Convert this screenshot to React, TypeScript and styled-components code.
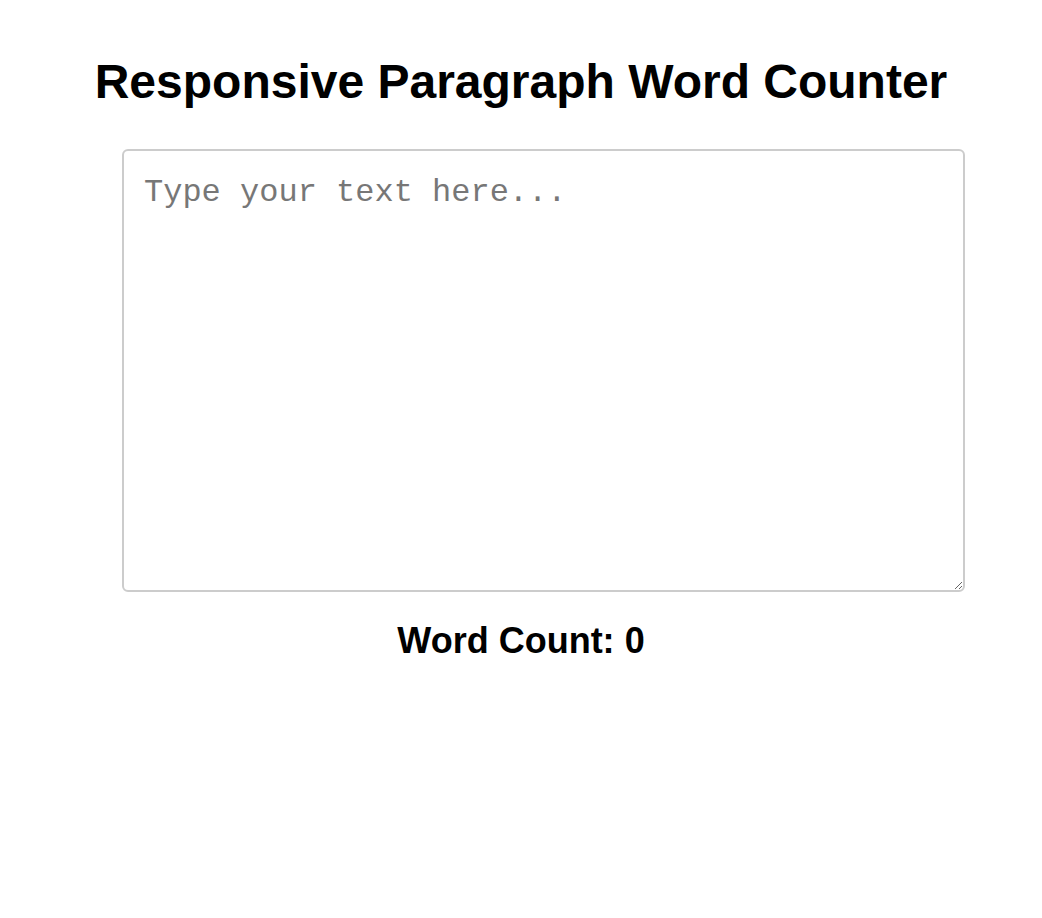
import React, { useState } from 'react';
import styled, { createGlobalStyle } from 'styled-components';

const GlobalStyle = createGlobalStyle`
  body {
    margin: 8px;
    background: #ffffff;
    font-family: "Liberation Sans", Arial, sans-serif;
  }
`;

const Page = styled.main`
  display: flex;
  flex-direction: column;
  align-items: center;
`;

const Title = styled.h1`
  margin: 46px 0 40px;
  font-size: 48px;
  font-weight: bold;
  color: #000;
  text-align: center;
`;

const TextBox = styled.textarea`
  box-sizing: border-box;
  align-self: flex-start;
  margin-left: 114px;
  width: 843px;
  height: 443px;
  padding: 23px 20px 16px;
  border: 2px solid #cccccc;
  border-radius: 6px;
  font-family: "Liberation Mono", "Courier New", monospace;
  font-size: 32px;
  color: #000;
  resize: both;
  outline: none;

  &::placeholder {
    color: #777777;
  }
`;

const Count = styled.h2`
  margin: 28px 0 0;
  font-size: 36px;
  font-weight: bold;
  color: #000;
`;

export default function App() {
  const [text, setText] = useState('');
  const words = text.trim() === '' ? 0 : text.trim().split(/\s+/).length;

  return (
    <>
      <GlobalStyle />
      <Page>
        <Title>Responsive Paragraph Word Counter</Title>
        <TextBox
          placeholder="Type your text here..."
          value={text}
          onChange={(e) => setText(e.target.value)}
        />
        <Count>Word Count: {words}</Count>
      </Page>
    </>
  );
}
